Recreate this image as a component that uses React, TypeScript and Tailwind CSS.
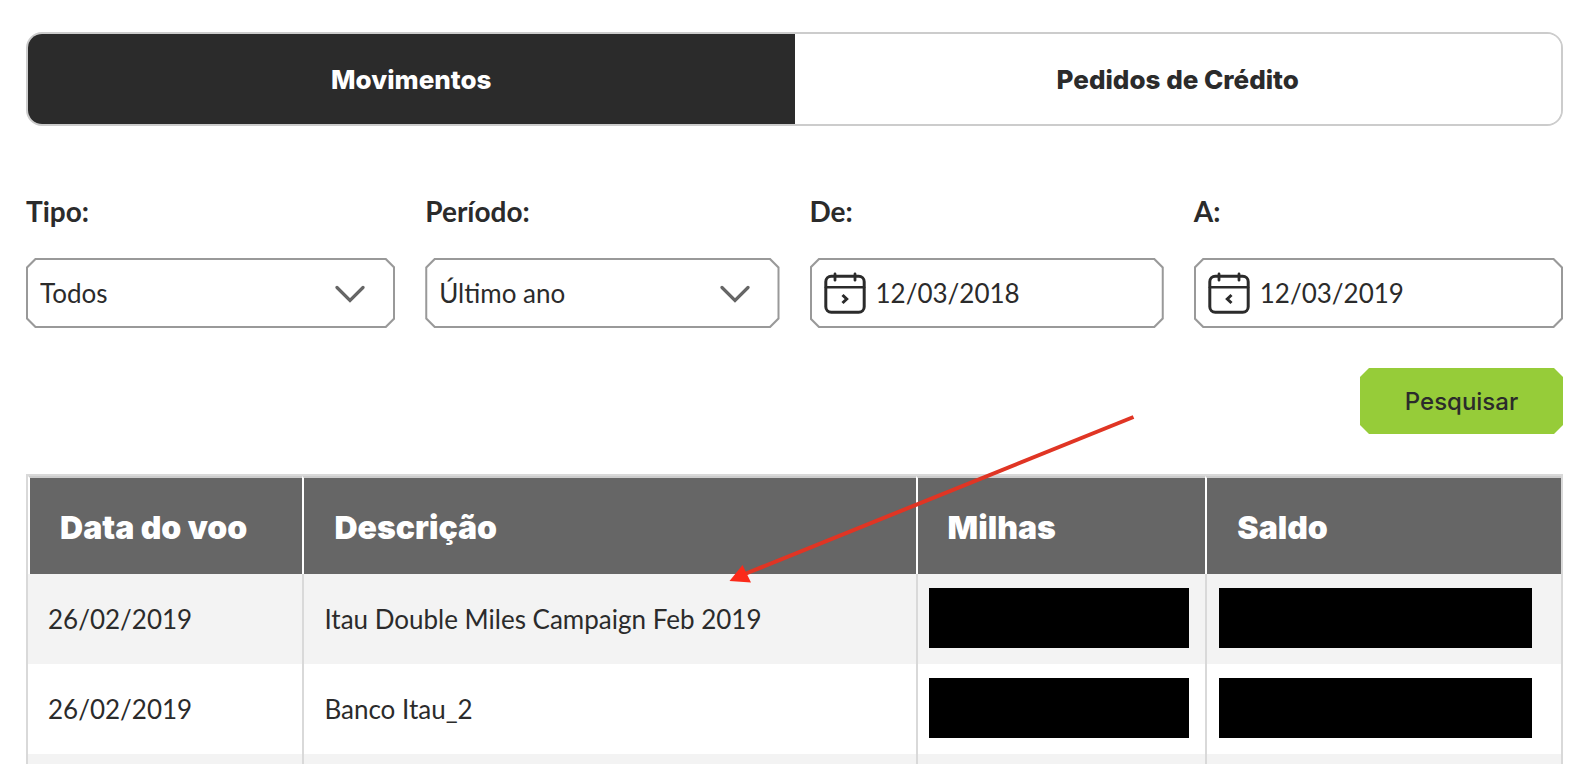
import React, { useState } from "react";

const outerCut =
    "[clip-path:polygon(9px_0,calc(100%-9px)_0,100%_9px,100%_calc(100%-9px),calc(100%-9px)_100%,9px_100%,0_calc(100%-9px),0_9px)]";
const innerCut =
    "[clip-path:polygon(8px_0,calc(100%-8px)_0,100%_8px,100%_calc(100%-8px),calc(100%-8px)_100%,8px_100%,0_calc(100%-8px),0_8px)]";

const movements = [
    { date: "26/02/2019", description: "Itau Double Miles Campaign Feb 2019" },
    { date: "26/02/2019", description: "Banco Itau_2" },
    { date: "", description: "" },
];

interface IFieldProps {
    id: string;
    label: string;
    children?: any;
}

const Field: React.FunctionComponent<IFieldProps> = (props) => {
    return (
        <div className="px-[15px] first:pl-0 last:pr-0">
            <label htmlFor={props.id} className="block text-[28px] leading-[34px] font-bold mb-[30px]">
                {props.label}
            </label>
            <div className={`bg-[#999999] p-[2px] ${outerCut}`}>
                <div className={`relative flex items-center h-[66px] bg-white ${innerCut}`}>
                    {props.children}
                </div>
            </div>
        </div>
    );
};

const ChevronDown = () => (
    <svg
        className="pointer-events-none absolute right-7 top-[25px]"
        width="30"
        height="18"
        viewBox="0 0 30 18"
        fill="none"
        stroke="#666666"
        strokeWidth="3.2"
        strokeLinecap="round"
    >
        <path d="M2 2.5L15 15.5L28 2.5" />
    </svg>
);

interface ICalendarProps {
    arrow: string;
}

const CalendarIcon: React.FunctionComponent<ICalendarProps> = (props) => (
    <svg
        className="ml-3 shrink-0"
        width="42"
        height="42"
        viewBox="0 0 42 42"
        fill="none"
        stroke="#2b2b2b"
        strokeWidth="3"
        strokeLinecap="round"
    >
        <rect x="1.8" y="4.3" width="38.4" height="36" rx="5.5" />
        <path d="M2 15.3H40" strokeWidth="2.6" />
        <path d="M11 2V8.2M31 2V8.2" strokeWidth="2.8" />
        <path d={props.arrow} strokeLinecap="butt" />
    </svg>
);

const App = () => {
    const [from, setFrom] = useState("12/03/2018");
    const [to, setTo] = useState("12/03/2019");

    return (
        <main className="relative h-screen overflow-hidden bg-white pl-[26px] pr-[27px] pt-8 font-[Lato,sans-serif] text-[26px] text-[#2b2b2b]">
            <div className="flex h-[94px] overflow-hidden rounded-2xl border-2 border-[#cccccc] font-[Inter,sans-serif] font-extrabold">
                <button type="button" className="flex-1 bg-[#2b2b2b] text-white">
                    Movimentos
                </button>
                <button type="button" className="flex-1 bg-white">
                    Pedidos de Crédito
                </button>
            </div>

            <form onSubmit={(e) => e.preventDefault()}>
                <div className="mt-[68px] grid grid-cols-4">
                    <Field id="tipo" label="Tipo:">
                        <select id="tipo" className="h-full w-full appearance-none bg-transparent pl-3 outline-none">
                            <option>Todos</option>
                        </select>
                        <ChevronDown />
                    </Field>
                    <Field id="periodo" label="Período:">
                        <select id="periodo" className="h-full w-full appearance-none bg-transparent pl-3 outline-none">
                            <option>Último ano</option>
                        </select>
                        <ChevronDown />
                    </Field>
                    <Field id="de" label="De:">
                        <CalendarIcon arrow="M18.5 23L22.7 27L18.5 31" />
                        <input
                            id="de"
                            type="text"
                            value={from}
                            onChange={(e) => setFrom(e.target.value)}
                            className="ml-[10px] h-full w-full min-w-0 bg-transparent outline-none"
                        />
                    </Field>
                    <Field id="a" label="A:">
                        <CalendarIcon arrow="M23.5 23L19.3 27L23.5 31" />
                        <input
                            id="a"
                            type="text"
                            value={to}
                            onChange={(e) => setTo(e.target.value)}
                            className="ml-[10px] h-full w-full min-w-0 bg-transparent outline-none"
                        />
                    </Field>
                </div>
                <div className="mt-10 flex justify-end">
                    <button
                        type="submit"
                        className={`h-[66px] w-[203px] bg-[#96cc39] pt-[2px] font-[Inter,sans-serif] text-2xl font-medium ${outerCut}`}
                    >
                        Pesquisar
                    </button>
                </div>
            </form>

            <table className="mt-10 w-full table-fixed border-separate border-spacing-0 border-2 border-[#d9d9d9]">
                <colgroup>
                    <col className="w-[17.9%]" />
                    <col className="w-[40%]" />
                    <col className="w-[18.9%]" />
                    <col />
                </colgroup>
                <thead>
                    <tr className="text-left font-[Inter,sans-serif] text-[32px] text-white">
                        {["Data do voo", "Descrição", "Milhas", "Saldo"].map((title) => (
                            <th
                                key={title}
                                className="h-[98px] border-l-2 border-t-2 border-l-white border-t-[#cccccc] bg-[#666666] pl-[30px] pt-1 font-black"
                            >
                                {title}
                            </th>
                        ))}
                    </tr>
                </thead>
                <tbody>
                    {movements.map((movement, index) => (
                        <tr key={index} className="h-[90px] odd:bg-[#f3f3f3]">
                            <td className="pl-5">{movement.date}</td>
                            <td className="border-l-2 border-[#d9d9d9] pl-5">{movement.description}</td>
                            <td className="border-l-2 border-[#d9d9d9] pl-[11px] pr-4 pb-[2px]">
                                {movement.date && <div className="h-[60px] bg-black" />}
                            </td>
                            <td className="border-l-2 border-[#d9d9d9] pl-3 pr-[29px] pb-[2px]">
                                {movement.date && <div className="h-[60px] bg-black" />}
                            </td>
                        </tr>
                    ))}
                </tbody>
            </table>

            <svg
                className="pointer-events-none absolute left-[728px] top-[414px]"
                width="408"
                height="170"
                viewBox="0 0 408 170"
            >
                <path d="M405.5 3L18 159.5" stroke="#e03524" strokeWidth="4" fill="none" />
                <path d="M1.5 167L14.5 151L23 168.5Z" fill="#fb2a1a" />
            </svg>
        </main>
    );
};

export default App;
